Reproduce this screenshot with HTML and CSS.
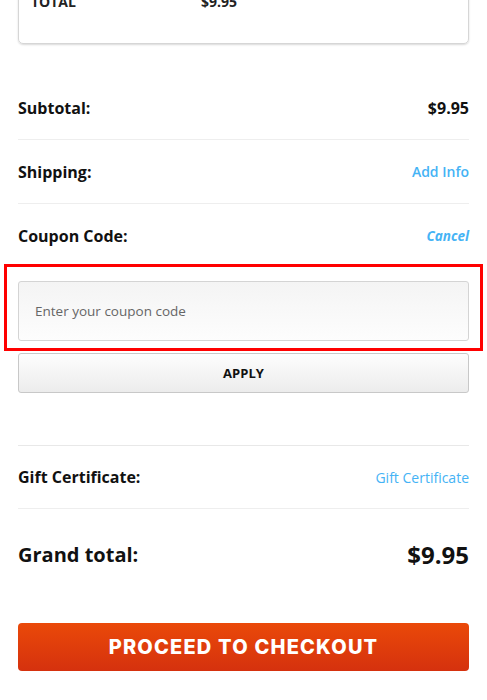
FILE: index.html
```html
<!DOCTYPE html>
<html lang="en">

<head>
    <meta charset="UTF-8">
    <meta name="viewport" content="width=device-width, initial-scale=1.0">
    <title>Cart Summary</title>
    <link rel="stylesheet" href="styles.css">
</head>

<body>
    <div class="page">
        <!-- Order summary card (scrolled) -->
        <div class="summary-card">
            <div class="summary-line">
                <span class="summary-label">TOTAL</span>
                <span class="summary-value">$9.95</span>
            </div>
        </div>

        <div class="totals">
            <div class="total-row">
                <span class="row-label">Subtotal:</span>
                <span class="row-value">$9.95</span>
            </div>
            <div class="total-row">
                <span class="row-label">Shipping:</span>
                <a class="row-link" href="#">Add Info</a>
            </div>
            <div class="total-row no-border">
                <span class="row-label">Coupon Code:</span>
                <a class="row-link italic" href="#">Cancel</a>
            </div>

            <div class="coupon-highlight">
                <input class="coupon-input" type="text" placeholder="Enter your coupon code">
            </div>
            <button class="btn-apply">APPLY</button>

            <div class="total-row top-border">
                <span class="row-label">Gift Certificate:</span>
                <a class="row-link light" href="#">Gift Certificate</a>
            </div>

            <div class="grand-row">
                <span class="grand-label">Grand total:</span>
                <span class="grand-value">$9.95</span>
            </div>

            <button class="btn-checkout">PROCEED TO CHECKOUT</button>
        </div>
    </div>
</body>

</html>
```

FILE: styles.css
```css
* {
    margin: 0;
    padding: 0;
    box-sizing: border-box;
}

body {
    font-family: 'Open Sans', 'Liberation Sans', sans-serif;
    color: #111;
    background: white;
    overflow: hidden;
}

.page {
    padding: 0 18px;
}

.summary-card {
    margin-top: -29px;
    height: 73px;
    border: 1px solid #d6d6d6;
    border-radius: 0 0 5px 5px;
    box-shadow: 0 1px 2px rgba(0, 0, 0, 0.15);
    padding: 20px 12px 0;
}

.summary-line {
    display: flex;
    font-weight: 700;
    font-size: 14px;
    line-height: 20px;
    color: #222;
}

.summary-label {
    width: 170px;
}

.totals {
    margin-top: 32px;
}

.total-row {
    display: flex;
    justify-content: space-between;
    align-items: center;
    height: 64px;
    border-bottom: 1px solid #eee;
}

.total-row.no-border {
    border-bottom: none;
    height: 60px;
    padding-top: 4px;
}

.total-row.top-border {
    border-top: 1px solid #e8e8e8;
    height: 64px;
    margin-top: 52px;
}

.row-label {
    font-weight: 700;
    font-size: 16px;
}

.row-value {
    font-weight: 700;
    font-size: 16px;
}

.row-link {
    color: #45b3f5;
    font-weight: 600;
    font-size: 14px;
    text-decoration: none;
}

.row-link.italic {
    font-style: italic;
    font-weight: 700;
    font-size: 13.5px;
}

.row-link.light {
    font-weight: 400;
}

.coupon-highlight {
    margin: 0 -14px;
    border: 3px solid #f00;
    padding: 14px 11px 7px;
}

.coupon-input {
    display: block;
    width: 100%;
    height: 60px;
    border: 1px solid #d4d4d4;
    border-radius: 3px;
    background: linear-gradient(to bottom, #f4f4f4, #fdfdfd);
    padding: 0 16px;
    font-family: inherit;
    font-size: 13.5px;
    color: #333;
}

.coupon-input::placeholder {
    color: #666;
}

.btn-apply {
    display: block;
    width: 100%;
    height: 40px;
    margin-top: 2px;
    border: 1px solid #c8c8c8;
    border-radius: 3px;
    background: linear-gradient(to bottom, #fdfdfd, #ececec);
    font-family: inherit;
    font-weight: 700;
    font-size: 13px;
    color: #111;
    cursor: pointer;
}

.grand-row {
    display: flex;
    justify-content: space-between;
    align-items: center;
    height: 90px;
}

.grand-label {
    font-weight: 700;
    font-size: 20px;
}

.grand-value {
    font-weight: 700;
    font-size: 24px;
}

.btn-checkout {
    display: block;
    width: 100%;
    height: 48px;
    margin-top: 24px;
    border: none;
    border-radius: 4px;
    background: linear-gradient(to bottom, #ea4909, #d5310e);
    color: white;
    font-family: 'Inter', sans-serif;
    font-weight: 800;
    font-size: 20px;
    letter-spacing: 1.2px;
    cursor: pointer;
}
```
